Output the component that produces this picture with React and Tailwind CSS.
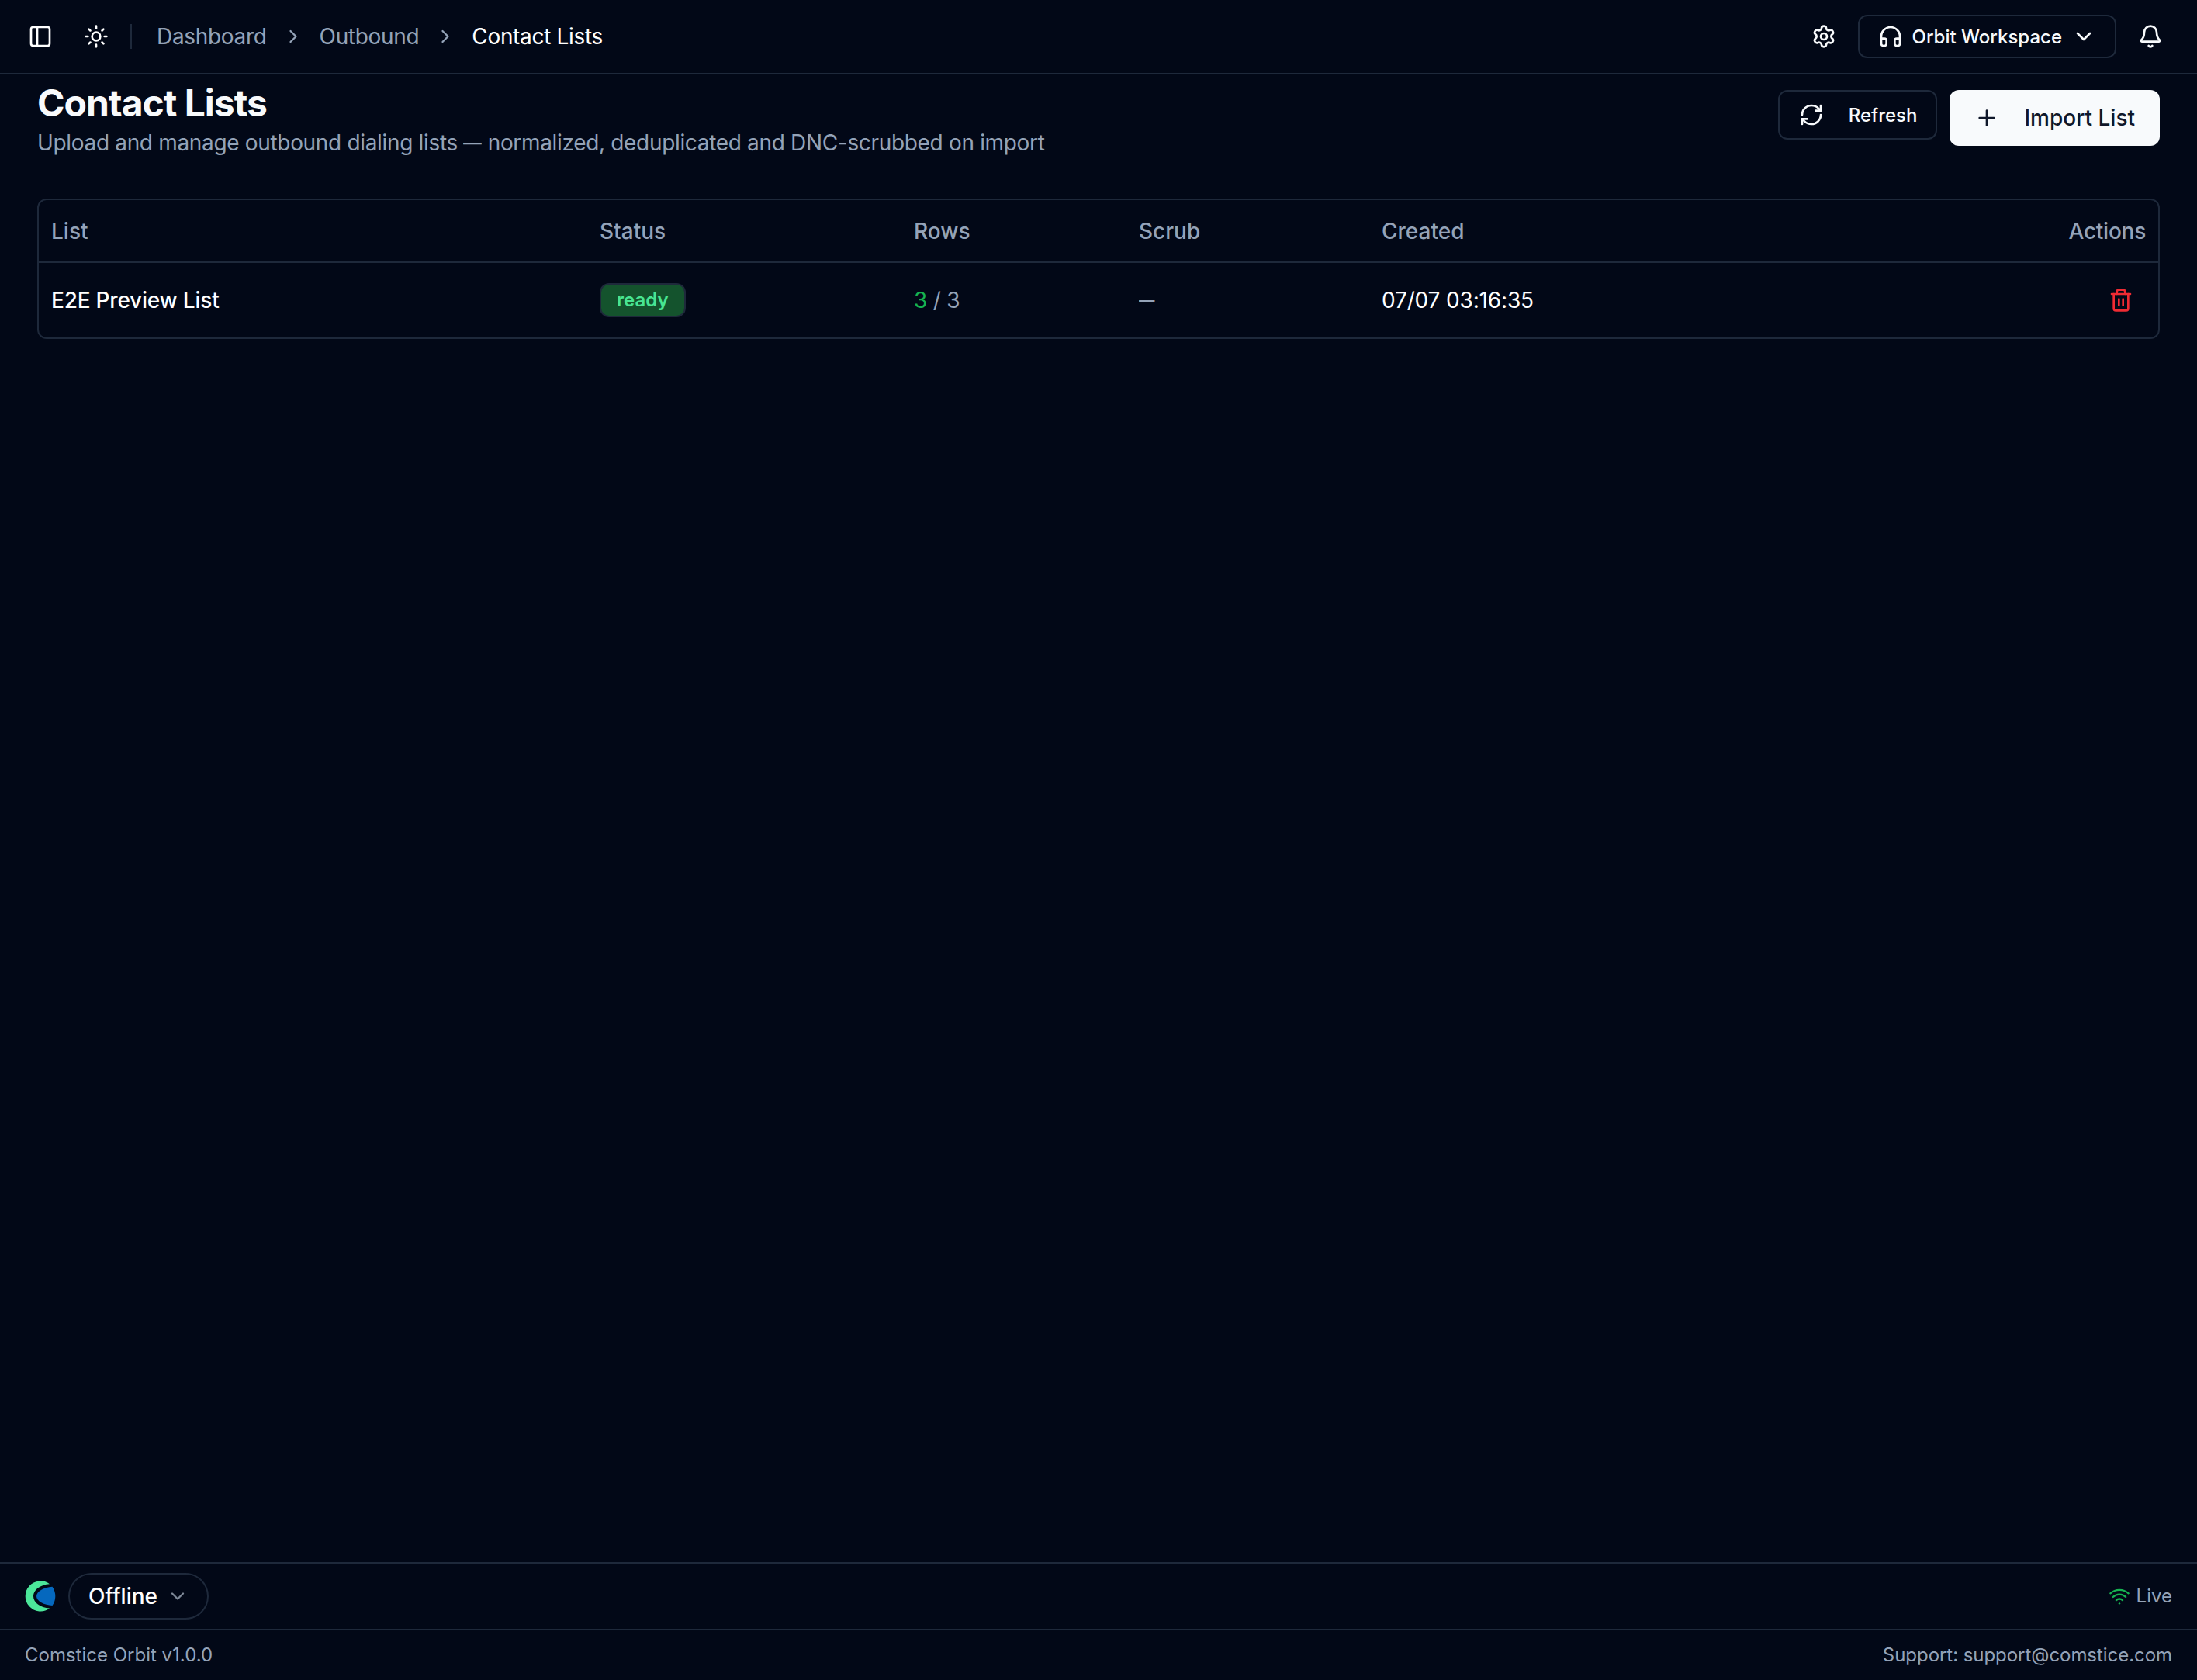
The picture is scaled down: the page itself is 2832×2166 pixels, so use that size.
import React from 'react';
import {
  Bell,
  ChevronDown,
  ChevronRight,
  Headphones,
  PanelLeft,
  Plus,
  RefreshCw,
  Settings,
  Sun,
  Trash2,
  Wifi,
} from 'lucide-react';

const lists = [
  { id: 1, name: 'E2E Preview List', status: 'ready', valid: 3, total: 3, scrub: '—', created: '07/07 03:16:35' },
];

function Header() {
  return (
    <header className="flex h-24 shrink-0 items-center justify-between border-b-2 border-[#1e293b] pr-11 pl-9">
      <div className="flex items-center">
        <button className="text-white">
          <PanelLeft className="size-8" />
        </button>
        <button className="ml-10 text-white">
          <Sun className="size-8" />
        </button>
        <div className="ml-7 h-8 w-0.5 bg-[#1e293b]" />
        <nav className="ml-8 flex items-center gap-5 text-[28px] leading-10 tracking-[-0.32px] text-[#94a3b8]">
          <span>Dashboard</span>
          <ChevronRight className="size-7" />
          <span>Outbound</span>
          <ChevronRight className="size-7" />
          <span className="text-white">Contact Lists</span>
        </nav>
      </div>

      <div className="flex items-center">
        <button className="text-[#f8fafc]">
          <Settings className="size-8" />
        </button>
        <button className="ml-7 flex h-14 items-center rounded-xl border-2 border-[#1e293b] px-6 text-2xl font-medium text-[#f8fafc]">
          <Headphones className="size-8" />
          <span className="mr-3 ml-[11px] pt-0.5">Orbit Workspace</span>
          <ChevronDown className="size-8" />
        </button>
        <button className="ml-7 text-[#f8fafc]">
          <Bell className="size-8" />
        </button>
      </div>
    </header>
  );
}

function PageTitle() {
  return (
    <div className="flex items-center justify-between">
      <div>
        <h1 className="mt-0.5 text-5xl leading-[62px] font-bold tracking-[-1px] text-[#f8fafc]">Contact Lists</h1>
        <p className="text-[28px] leading-10 tracking-[-0.33px] text-[#94a3b8]">
          Upload and manage outbound dialing lists{' '}
          <span className="-mr-1 inline-block origin-left scale-x-85">—</span> normalized, deduplicated and
          DNC-scrubbed on import
        </p>
      </div>
      <div className="flex items-start gap-4">
        <button className="flex h-16 items-center gap-8 rounded-xl border-2 border-[#1e293b] pr-6 pl-[25px] text-2xl font-medium text-[#f8fafc]">
          <RefreshCw className="size-8" />
          <span className="pt-0.5">Refresh</span>
        </button>
        <button className="flex h-18 items-center gap-8 rounded-xl bg-[#f8fafc] px-8 text-[28px] font-medium text-[#0f172a]">
          <Plus className="size-8" />
          Import List
        </button>
      </div>
    </div>
  );
}

function ListsTable() {
  return (
    <div className="mt-[52px] rounded-xl border-2 border-[#1e293b]">
      <table className="w-full table-fixed border-separate border-spacing-0 text-left text-[28px] leading-10">
        <colgroup>
          <col className="w-[707px]" />
          <col className="w-[405px]" />
          <col className="w-[290px]" />
          <col className="w-[313px]" />
          <col />
          <col className="w-[200px]" />
        </colgroup>
        <thead>
          <tr className="text-[#94a3b8]">
            <th className="h-[81px] border-b-2 border-[#1e293b] px-4 font-medium">List</th>
            <th className="border-b-2 border-[#1e293b] px-4 font-medium">Status</th>
            <th className="border-b-2 border-[#1e293b] px-4 font-medium">Rows</th>
            <th className="border-b-2 border-[#1e293b] px-4 font-medium">Scrub</th>
            <th className="border-b-2 border-[#1e293b] px-4 font-medium">Created</th>
            <th className="border-b-2 border-[#1e293b] px-4 text-right font-medium tracking-[-0.25px]">Actions</th>
          </tr>
        </thead>
        <tbody>
          {lists.map((list) => (
            <tr key={list.id} className="h-24 text-white">
              <td className="px-4 font-medium tracking-[-0.22px]">{list.name}</td>
              <td className="px-4">
                <div className="flex">
                  <span className="rounded-xl border-2 border-[#1e293b] bg-[#14532d] px-5 py-1 text-2xl leading-8 font-semibold text-[#48e592]">
                    {list.status}
                  </span>
                </div>
              </td>
              <td className="px-4 tracking-[-0.2px] text-[#94a3b8]">
                <span className="text-[#16b351]">{list.valid}</span> / {list.total}
              </td>
              <td className="px-4 text-2xl text-[#94a3b8]">
                <span className="inline-block origin-left scale-x-85">{list.scrub}</span>
              </td>
              <td className="px-4 tracking-[-0.15px]">{list.created}</td>
              <td className="px-4">
                <button className="ml-auto flex size-16 items-center justify-center text-[#ef2b33]">
                  <Trash2 className="size-8" />
                </button>
              </td>
            </tr>
          ))}
        </tbody>
      </table>
    </div>
  );
}

function Logo() {
  return (
    <svg viewBox="0 0 40 40" className="size-10">
      <path d="M32 4.2A19.6 19.6 0 1 0 32 35.6C20 34.500 11 28.500 11 20S20 5.200 32 4.200Z" fill="#4ce69a" />
      <path d="M35.500 7.700C40.600 15 40.600 25 35.500 32C25 31.500 15 26.500 15 20S25 8.200 35.500 7.700Z" fill="#0568be" />
    </svg>
  );
}

function StatusBar() {
  return (
    <div className="flex h-[86px] shrink-0 items-center justify-between border-t-2 border-[#1e293b] px-8">
      <div className="flex items-center gap-4">
        <Logo />
        <button className="flex h-15 items-center rounded-full border-2 border-[#1e293b] px-6 text-[28px] font-medium text-white">
          Offline
          <ChevronDown className="ml-3 size-7 text-[#7f8998]" />
        </button>
      </div>
      <div className="flex items-center gap-2 text-2xl text-[#94a3b8]">
        <Wifi className="size-7 text-[#16b351]" />
        Live
      </div>
    </div>
  );
}

export default function App() {
  return (
    <div className="flex h-screen flex-col bg-[#020817] font-[Inter,sans-serif]">
      <Header />
      <main className="flex-1 px-12 pt-1">
        <PageTitle />
        <ListsTable />
      </main>
      <StatusBar />
      <footer className="flex h-[66px] shrink-0 items-center justify-between border-t-2 border-[#1e293b] px-8 text-2xl text-[#94a3b8]">
        <span>Comstice Orbit v1.0.0</span>
        <span className="tracking-[-0.05px]">Support: support@comstice.com</span>
      </footer>
    </div>
  );
}
